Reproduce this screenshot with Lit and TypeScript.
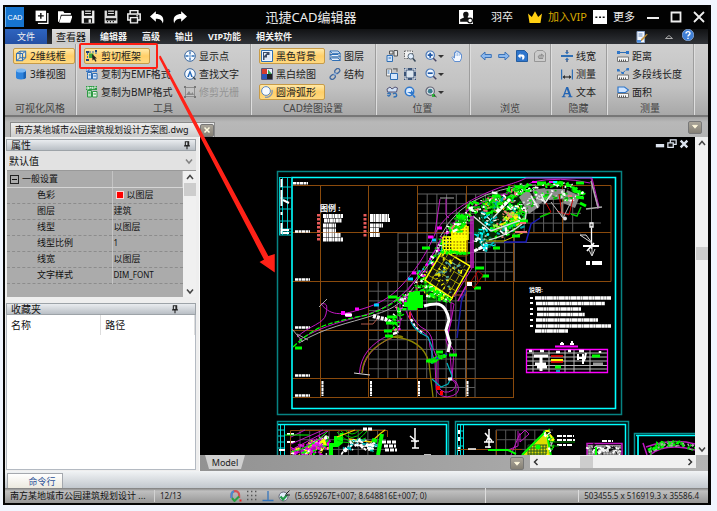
import { LitElement, html, css, svg } from "lit";
import { customElement, state } from "lit/decorators.js";

const B = "#2f6fb5";
const N = "#1d3f73";

/* Icon artwork, each on a 12 x 12 grid */
const icons: Record<string, unknown> = {
  wire: svg`<path d="M1.500 3.500 5 1.200h5.700v6.600L7.500 10.700H1.500zM1.500 3.500h6v7.200M7.500 3.500l3.200-2.300M5 1.200v6.600h5.700M5 7.800 1.500 10.700" fill="#e9f3ff" fill-opacity=".6" stroke=${B}/>`,
  cyl: svg`<path d="M1 2.500v7c0 2.600 10 2.600 10 0v-7z" fill="#2d83dd"/><ellipse cx="6" cy="2.600" rx="5" ry="2" fill="#78b7f5"/><path d="M8.500 4.500v6.400c1.600-.3 2.500-.8 2.500-1.400v-7c0 .9-1 1.600-2.500 2z" fill="#1a63b5"/>`,
  clip: svg`<path d="M0 1h3v2H0zM9 0h2v2H9zM0 9h3v2H0z" fill=${N}/><path d="M1.500 3v6M3 2h6M10 2v3" stroke=${B} stroke-dasharray="2 1" fill="none"/><path d="M3 3.500h4.500v4.500H3z" fill="#3fa83b"/><path d="m6 4 5 4.400-2 .1 1.600 2.400-1.200.8L8 9.300 6.500 10.600z" fill="#222"/>`,
  emf: svg`<path d="M0 0h11v4H0z" fill="#3a76c4"/><path d="M1 3V1h2M4 3V1l1.200 1L6.400 1v2M8 3V1h2" stroke="#fff" stroke-width=".8" fill="none"/><path d="M1.500 4.500h4v6.500h-4zM6.500 5.500h4.500v5.500H6.500z" fill="#dbe9fb" stroke=${B}/><path d="M7.500 8h2.500M2.500 7h2" stroke=${B}/>`,
  bmp: svg`<path d="M0 0h11v4H0z" fill="#2f9a45"/><path d="M1 3V1h1.600v2zM4 3V1l1.200 1L6.400 1v2M8 3V1h2v1" stroke="#fff" stroke-width=".8" fill="none"/><path d="M1.500 4.500h4v6.500h-4z" fill="#b7e3bd" stroke="#2f9a45"/><path d="M6.500 5.500h4.500v5.500H6.500z" fill="#eaf6ea" stroke="#2f9a45"/><path d="M7.500 8h2.500M2.500 7h2" stroke="#2f9a45"/>`,
  point: svg`<circle cx="6" cy="6" r="5.300" fill="#f6faff" stroke="#3b689f"/><path d="M6 1.500v3M6 7.500v3M1.500 6h3M7.500 6h3" stroke=${B} stroke-width="1.300"/><circle cx="6" cy="6" r=".8" fill=${B}/>`,
  find: svg`<circle cx="6" cy="6" r="5.300" fill="#f6faff" stroke="#3b689f"/><path d="M6 2 3.200 9h1.600L6 5.500 7.200 9h1.600z" fill="#2468b8"/><path d="m9 9 2.500 2.500" stroke="#345" stroke-width="1.400"/>`,
  raster: svg`<path d="M1.500 1.500h9v9h-9z" fill="#c4c4c4" stroke="#8d8d8d"/><path d="m2 9 3-4 2 3 1.500-2L10 9z" fill="#888"/><path d="M0 0h2v2H0zM10 0h2v2h-2zM0 10h2v2H0zM10 10h2v2h-2z" fill="#777"/>`,
  dark: svg`<path d="M.5.500h11v11H.5z" fill="#eef5ff" stroke=${B}/><path d="M2 2h8v8H2z" fill="#3d4d68"/><path d="M3.500 10V7.500H6V5H8.500V2H10v8zM3 3h3L3 6z" fill="#dfe9f7"/>`,
  bw: svg`<path d="M.5.500h11v11H.5z" fill="#fff" stroke="#557"/><path d="M1 1h5v5H1z" fill="#d63a2c"/><path d="M6 1h5v5H6z" fill="#eef"/><path d="M1 6h5v5H1z" fill="#2c55b8"/><path d="M6 6h5v5H6z" fill="#222"/><path d="M7 1.500 11 6H7z" fill="#33a055"/>`,
  arc: svg`<circle cx="5" cy="5" r="4.400" fill="#f7fbff" stroke="#5d88c0"/><path d="M11 4c1 4.500-2.500 8-7 7.300" fill="none" stroke="#8899b5" stroke-width="1.400"/>`,
  layers: svg`<path d="M1 1h8l2.300 2.300H3.200zM1 4.500h8l2.300 2.300H3.200zM1 8h8l2.300 2.500H3.200z" fill="#e8f2ff" stroke=${B}/><path d="M1 1v9M11.300 3.300v7" stroke=${B} stroke-width=".7"/>`,
  chain: svg`<rect x="5.500" y="1" width="5.500" height="4" rx="2" transform="rotate(-42 8.200 3)" fill="none" stroke="#41699f" stroke-width="1.300"/><rect x="1" y="7" width="5.500" height="4" rx="2" transform="rotate(-42 3.700 9)" fill="none" stroke="#41699f" stroke-width="1.300"/><path d="m4.500 7.500 3-3" stroke="#7fa6d8" stroke-width="1.300"/>`,
  locA: svg`<path d="M3.500 1H7v3H3.500zM8 .500h3.500v5.500H8z" fill="#e6e6e6" stroke="#555"/><path d="M1 5.500h5.500v6H1z" fill="#cfe3fb" stroke=${B}/><path d="M2.500 8h2.500" stroke=${B}/>`,
  locB: svg`<path d="M.5 1h5v7h-5z" fill="#f4f4f4" stroke="#777"/><path d="M1.500 3h2M1.500 5h2" stroke=${B}/><path d="M4.500 5.500h7v6h-7z" fill="#d6e8fc" stroke=${B}/><path d="M7 .8h4v3" fill="none" stroke="#666" stroke-width="1.200"/>`,
  locC: svg`<path d="M1 3 4 1l2 2 3-2 2.500 1-1 4H1.500z" fill="#cfe0f5" stroke="#557"/><path d="M1.500 8q1.800-2 3 0-1.600 3.500-3 1M7 8q2.500-2 3.500.5T7.500 11" fill="none" stroke=${B} stroke-width="1.400"/>`,
  zwin: svg`<path d="M.5 1h8v7.500h-8z" fill="#f1f1f1" stroke="#666" stroke-dasharray="1.500 1"/><circle cx="6.800" cy="6.300" r="2.800" fill="#e3f0ff" stroke="#567"/><path d="m9 8.500 2.500 3" stroke="#345" stroke-width="1.500"/>`,
  zext: svg`<path d="M0 0h12v12H0z" fill="#3a5376"/><path d="M2.500 2.500h7v7h-7z" fill="#dbe5ee"/><path d="M1 4V1h3M8 1h3v3M11 8v3H8M4 11H1V8" fill="none" stroke="#fff"/>`,
  zprev: svg`<circle cx="5.500" cy="5.500" r="4.200" fill="#dcecff" stroke="#2f78cc" stroke-width="1.500"/><path d="M3 6h4V4l3 3-3 2.500V8" fill="#2f78cc"/><path d="m9 9 2 2.500" stroke="#2f78cc" stroke-width="1.700"/>`,
  zin: svg`<circle cx="5.200" cy="5.200" r="4.200" fill="#f2f8ff" stroke="#4b7ab8" stroke-width="1.200"/><path d="M2.700 5.200h5M5.200 2.700v5" stroke="#1f57a5" stroke-width="1.700"/><path d="m8.300 8.300 3 3" stroke="#446" stroke-width="1.500"/>`,
  zout: svg`<circle cx="5.200" cy="5.200" r="4.200" fill="#f2f8ff" stroke="#4b7ab8" stroke-width="1.200"/><path d="M2.700 5.200h5" stroke="#1f57a5" stroke-width="1.700"/><path d="m8.300 8.300 3 3" stroke="#446" stroke-width="1.500"/>`,
  zobj: svg`<circle cx="5.200" cy="5.200" r="4.200" fill="#dbe5ea" stroke="#667" stroke-width="1.200"/><circle cx="5.200" cy="5.200" r="2.400" fill="#3e7c8e"/><path d="M7 8h3v3H7z" fill="#2fae3a"/><path d="m9 9 2.500 2" stroke="#333"/>`,
  hand: svg`<path d="M3.500 11.500 1 7.500l.8-.8L3.500 8V2.500h1.400V1h1.500v.7h1.500v1h1.400v1.500h1.200v4L9 11.500z" fill="#f4f8ff" stroke="#5f8ed0"/><path d="M5 3v3M6.600 2.500V6M8.200 3.500V6" stroke="#8fb2e0" stroke-width=".8"/>`,
  back: svg`<path d="M.7 6 5 2v2.500h6.300v3H5V10z" fill="#8bb8ee" stroke="#3c73b8"/>`,
  fwd: svg`<path d="M11.300 6 7 2v2.500H.7v3H7V10z" fill="#8bb8ee" stroke="#3c73b8"/>`,
  undoV: svg`<path d="M.5.500h8l3 3v8H.5z" fill="#2f76cd" stroke="#245d9f"/><path d="M2 9.500h5.500c3-4-1-6-3-4.500V3.500L1.800 6l2.700 2.500V6.800c1-.6 2.500 0 1.500 2.700" fill="#fff"/>`,
  redoV: svg`<path d="M3 .5h6l2.500 2.500v8.500H.5V3z" fill="#cbcbcb" stroke="#969696"/><path d="M9 8.500H5c-2-3 1-4 2.500-3V4L10 6.200" fill="#aaa" stroke="#8c8c8c"/>`,
  lw: svg`<path d="M0 5h12v2H0z" fill="#2f6fb5"/><path d="M6 0v3M6 12V9" stroke=${N} stroke-width="1.200"/><path d="m4 2 2 2.500L8 2zM4 10l2-2.500L8 10z" fill=${B}/>`,
  dim: svg`<path d="M.6 1.500v10M11.400 1.500v10" stroke=${B} stroke-width="1.200"/><path d="M2 9h8" stroke="#333" stroke-width="1.200"/><path d="m1.500 9 2.500-2v4zM10.500 9 8 7v4z" fill="#333"/>`,
  txt: svg`<path d="M5.300 1h1.800l3.300 9.300h1v1H7.200v-1h1L7.500 8.200H4l-.7 2.100h1.200v1H.8v-1h1zM4.400 7h2.700L5.800 3.300z" fill="#2465b4"/>`,
  dist: svg`<path d="M.5 11.500V7h11v4.500z" fill="#f5f5f5" stroke="#777"/><path d="M2.500 9.500v2M4.500 9.500v2M6.500 9.500v2M8.500 9.500v2" stroke="#555"/><path d="M2 2.500h8" stroke=${B}/><path d="M0 1h3v3H0zM9 1h3v3H9z" fill="#2f76c8"/>`,
  poly: svg`<path d="M.5 11.500V7h11v4.500z" fill="#f5f5f5" stroke="#777"/><path d="M2.500 9.500v2M4.500 9.500v2M6.500 9.500v2M8.500 9.500v2" stroke="#555"/><path d="m1.500 2 4 3 5-4" stroke=${B} fill="none" stroke-dasharray="2 1"/><path d="M0 1h2.500v2.500H0zM4.500 4H7v2H4.500zM9.500 0H12v2.500H9.500z" fill="#2f76c8"/>`,
  area: svg`<path d="M.5 11.500V7.500h11v4z" fill="#f5f5f5" stroke="#777"/><path d="M2.500 9.500v2M4.500 9.500v2M6.500 9.500v2M8.500 9.500v2" stroke="#555"/><path d="M1 1h6.500l4 3-3 2.500H1z" fill="#cfe4ff" stroke="#2f76c8" stroke-width="1.200"/>`,
  add: svg`<path d="M.5.500h9v9h-9z" fill="#fff"/><path d="M5 2.500v5M2.500 5h5" stroke="#111" stroke-width="1.200"/><path d="M11 2.500v9H2.500" fill="none" stroke="#fff" stroke-width="1.200"/>`,
  open: svg`<path d="M0 1h4.500l1 1.500H11V4H2.500L1 10H0z" fill="#fff"/><path d="M3 5h9.500l-2 6H1z" fill="#fff"/>`,
  save: svg`<path d="M.5.500h11v11H.5z" fill="#eee"/><path d="M2.500 0h7v5h-7z" fill="#111"/><path d="M3.500 1h5M3.500 3h5" stroke="#ddd"/><path d="M2.500 7h7v4h-7z" fill="#111"/><path d="M6.500 8h2v3h-2z" fill="#eee"/>`,
  saveas: svg`<path d="M.5.500h11v11H.5z" fill="#ddd"/><path d="M2.500 0h7v5h-7z" fill="#111"/><path d="M3.500 1h5M3.500 3h5" stroke="#ddd"/><path d="M1.500 7h9v2h-9z" fill="#111"/><path d="M2.500 10h1M5 10h1M7.500 10h1" stroke="#111"/>`,
  print: svg`<path d="M2.700.5h6.600v3H2.700zM.7 3.500h10.600v5H.7z" fill="#111" stroke="#eee" stroke-width="1.300"/><path d="M3 6.500h6V11H3z" fill="#111" stroke="#eee" stroke-width="1.200"/><path d="M8 5h1.500" stroke="#fff"/>`,
  undo: svg`<path d="M5 1v2.500c5 0 7.500 3 6 8-.8-3-2.500-4-6-4V10L0 5.500z" fill="#fff"/>`,
  redo: svg`<path d="M7 1v2.500c-5 0-7.500 3-6 8 .8-3 2.500-4 6-4V10l5-4.500z" fill="#fff"/>`,
  user: svg`<path d="M0 0h12v12H0z" fill="#fff"/><path d="M6 1.500c2.300 0 2.500 2 2 3.500L7.300 6.300 10 7.500V10H1V8l3.300-1.500L3.700 5c-.5-2 0-3.500 2.300-3.500z" fill="#111"/><circle cx="9.500" cy="9" r="2" fill="#fff" stroke="#111"/>`,
  crown: svg`<path d="M0 3 3.300 6 6 1l2.700 5L12 3l-1.300 8.200H1.300z" fill="#ffcf12"/>`,
  dots: svg`<path d="M0 0h12v12H0z" fill="#fff"/><path d="M2 5.500h1.700v1.300H2zM5.200 5.500h1.700v1.300H5.200zM8.300 5.500H10v1.300H8.300z" fill="#111"/>`,
  min: svg`<path d="M0 6h12v2H0z" fill="#eee"/>`,
  max: svg`<path d="M1.500 1.500h9v9h-9z" fill="none" stroke="#eee" stroke-width="1.800"/>`,
  close: svg`<path d="m1 1 10 10M11 1 1 11" stroke="#eee" stroke-width="1.800"/>`,
  note: svg`<path d="M1 .5h7.500v11H1z" fill="#f4f8ff" stroke="#8aa3c8"/><path d="M2.500 3h4M2.500 5h4" stroke="#6b8dc0"/><path d="m11.500 3.500-5 5.500-1.500 1 .6-2 5-5z" fill="#e8a63a" stroke="#8b6a24" stroke-width=".5"/><path d="M1 9h4v2.500H1z" fill="#4b8ee0"/>`,
  caret: svg`<path d="m2.500 7.500 3.500-3 3.500 3z" fill="none" stroke="#aaa"/>`,
  help: svg`<circle cx="6" cy="6" r="5.800" fill="#3f7fd6" stroke="#a8c5ee" stroke-width=".6"/><path d="M4 4.500c0-2.500 4-2.500 4 0 0 1.300-2 1.400-2 3M6 8.700V10" fill="none" stroke="#fff" stroke-width="1.400"/>`,
  pin: svg`<path d="M4 2h4v4.500H4zM2.500 7h7M6 7v4" fill="none" stroke="#222" stroke-width="1.300"/><path d="M6.500 2H8v4.500H6.500z" fill="#222"/>`,
  magnet: svg`<path d="M1.500 8V5a3.800 3.800 0 0 1 7.600 0v3" fill="none" stroke="#d45252" stroke-width="2.200"/><path d="M1.500 8V5c0-2 1-3.300 2.500-3.700" fill="none" stroke="#4a8bd0" stroke-width="2.200"/><path d="m2 8 2.500 3L9 6.500" fill="none" stroke="#28a044" stroke-width="2"/><path d="M9.500 9.500h2v2h-2z" fill="#e22"/>`,
  grid: svg`<path d="M1 1.500h11M1 5.500h11M1 9.500h11" stroke="#555" stroke-width="1.400" stroke-dasharray="1.400 2.600"/>`,
  ortho: svg`<path d="M6 1v9.500M.5 10.500h11" stroke="#3576bd" stroke-width="1.300"/>`,
  snap: svg`<circle cx="5.500" cy="6.500" r="4.500" fill="#e3eefb" stroke="#667"/><path d="m2.500 6.500 2.500 3 4-4.500" fill="none" stroke="#23984a" stroke-width="2.200"/><path d="M8 4 11.500.500M7 5h5" stroke="#222"/>`,
  mrest: svg`<path d="M4 1h7v5.500H4z" fill="#111" stroke="#dce3ee" stroke-width="1.500"/><path d="M1 4.500h6.500V10H1z" fill="#111" stroke="#dce3ee" stroke-width="1.500"/>`,
  mclose: svg`<path d="m2 2 8 8M10 2l-8 8" stroke="#dce3ee" stroke-width="2.800"/>`,
  mmin: svg`<path d="M1 6h10v4H1z" fill="#dce3ee"/>`,
  chevU: svg`<path d="m3 8 3-3.500L9 8" fill="none" stroke="#444" stroke-width="1.500"/>`,
  chevD: svg`<path d="m3 4.500 3 3.500 3-3.500" fill="none" stroke="#444" stroke-width="1.500"/>`,
  chevL: svg`<path d="M7.500 3 4.500 6l3 3" fill="none" stroke="#333" stroke-width="1.500"/>`,
  chevR: svg`<path d="m4.500 3 3 3-3 3" fill="none" stroke="#333" stroke-width="1.500"/>`,
  wchev: svg`<path d="m3 4 3 3.500L9 4z" fill="#fff8dc" stroke="#fff8dc"/>`,
  wx: svg`<path d="m3 3 6 6M9 3 3 9" stroke="#fffbe0" stroke-width="1.800"/>`,
};

const icon = (name: string, cls = "ic") =>
  html`<svg class=${cls} viewBox="0 0 12 12" aria-hidden="true">${icons[name]}</svg>`;

/* Repeatable noise so the planting and roads look the same at every paint */
function noise(seed: number) {
  let s = seed;
  return () => ((s = (s * 16807) % 2147483647) - 1) / 2147483646;
}

type Pt = [number, number];

function scatter(path: Pt[], spread: number, count: number, colors: string[], seed: number, size = 4, flat = 0.7) {
  const r = noise(seed);
  r();
  const out: unknown[] = [];
  for (let i = 0; i < count; i++) {
    const t = r() * (path.length - 1);
    const k = Math.floor(t);
    const f = t - k;
    const x = path[k][0] + (path[k + 1][0] - path[k][0]) * f + (r() - 0.5) * spread;
    const y = path[k][1] + (path[k + 1][1] - path[k][1]) * f + (r() - 0.5) * spread;
    const w = 1 + r() * size;
    const a = r() * 3;
    out.push(svg`<path d="M${x} ${y}l${Math.cos(a) * w} ${-Math.sin(a) * w * flat}" stroke=${colors[Math.floor(r() * colors.length)]} stroke-width=${1 + r() * 1.5}/>`);
  }
  return out;
}

function mesh(x0: number, y0: number, x1: number, y1: number, step: number) {
  let d = "";
  for (let x = x0; x <= x1 + 1; x += step) d += `M${x} ${y0}V${y1}`;
  for (let y = y0; y <= y1 + 1; y += step) d += `M${x0} ${y}H${x1}`;
  return d;
}

@customElement("cad-drawing")
class CadDrawing extends LitElement {
  static styles = css`
    :host { display: block; background: #000; overflow: hidden; }
    svg { display: block; width: 100%; height: 100%; font-family: "Liberation Serif", "Noto Sans CJK SC", serif; }
  `;

  render() {
    return html`<svg viewBox="200 137 495 318" preserveAspectRatio="xMinYMin slice" fill="none">
      <path d="${mesh(417.5, 194, 581, 233, 9.7)}M417 242.500H562M591.500 185v48M601 223H581" stroke="#606060"/>
      <path d=${mesh(398, 233, 514, 281, 9.7)} stroke="#606060"/>
      <path d="${mesh(368.5, 281.5, 475, 378, 9.7)}M436 387.500h39M436.400 378v19M446 378v19M456 378v19M465.500 378v19M475 378v19" stroke="#5c5c5c"/>
      <path d="M292 185.500H611V281.500H292M292 232.500H611M292 330.500H514M292 378.500H514M292 397.500H514M320.500 185V397M368.500 185V397M417.500 185V233M417.500 281V397M466.500 185V397M513.500 233V397M562.500 185V281" stroke="#8a4a0c"/>
      <path d="M277.500 171.500H621.500V414.500H277.500z" stroke="#078282" stroke-width="1.500"/>
      <path d="M292 177.500H615.500V408.500H292z" stroke="#0ff" stroke-width="1.600"/>
      <path d="M279.500 177.500H292M279.500 177V235M282.500 177v58M287.500 177v58M279 187h13M279 198h13M279 209h13M279 221h13M279 229h13M279 232h13M279 235h13" stroke="#0cc"/>
      <path d="M281.500 179v8M281.500 190v16M281.500 212v3M281.500 223v11M289 203l-6-3M281 230h8M283 233h6" stroke="#fff" stroke-width="2"/>
      <g stroke="#fff" stroke-width="2.400" stroke-dasharray="3 .5">
        <path d="M293 183.300h15M295 231.500h15M295 279.500h15M295 327.500h15M295 375.500h15M295 395.500h15"/>
        <path d="M322.500 381v15M371 381v15M419 381v15M467.500 381v15" stroke-width="2"/>
      </g>
      <text x="320" y="211" font-size="8" font-weight="bold" fill="#fff">图例 :</text>
      <g stroke="#fff" stroke-width="4" stroke-dasharray="3 .4 2 .5">
        <path d="M323 216h20M324 220.500h18M323 225.500h13M323 230.500h13M323 235h18M323 239.500h20M370 216h19M370 220h20M370 225.500h13M370 230h9M370 235h10"/>
      </g>
      <path d="M318.500 214v28M365 214v24" stroke="#e85b5b" stroke-width="3" stroke-dasharray="2.500 1.500"/>

      <g stroke="#c217c2">
        <path d="M297 337C310 325 324 324 326 314S326 303 321 304M321 304C332 318 345 314 362 309S390 298 402 285 426 255 434 236 462 204 484 194 515 184 526 178M299 340C325 324 350 320 368 314S400 299 412 284 436 250 443 237 466 209 488 200 524 188 534 181"/>
        <path d="M440 199 435 232M446 199v16l3 3M526 178h66l7 29M591 178l7 31M532 182q28-6 58 1M408 290q26-34 34-54M466 211q18-12 42-17"/>
        <path d="M438 276C432 283 428 290 400 298M400 296v28q0 7-7 11M389 335Q361 348 359.500 373M393 337Q364 350 362.500 373"/>
        <path d="M406 311q6 16 17 21 7 4 7 15l5 15 1 23q-1 11 11 12 14-2 11-11-1-5-6-7l2-28-7-12 4-17 3-18-10-5M410 311q5 14 16 19 7 5 7 18l5 13v25q5 10 15 4 6-6-1-10l-2-27-4-13 5-19v-18M472 268l-18 29"/>
      </g>
      <path d="M299 343C325 327 350 323 371 316S398 307 414 287M297 334l11 6M292 329l11 13M319 307l8-8M414 284q24-30 28-43M440 237q15-30 46-42 30-11 50-10M440 198h14" stroke="#aaa"/>
      <path d="M293 347q19-18 36-23t38-9q25-9 33-18" stroke="#0f0" stroke-width="1.300" stroke-dasharray="5 2"/>
      <path d="M295 348h7M342 313h2M398 297v4" stroke="#0f0" stroke-width="3"/>
      <path d="M341 313h4M346 315h5" stroke="#f0f" stroke-width="4"/><path d="M345 315h7" stroke="#fff" stroke-width="3"/>
      <path d="M374 305h5M408 279h5M432 240h4" stroke="#0cf" stroke-width="3"/><path d="M437 228h5M428 237h5M412 273h4M355 309h4" stroke="#f0f" stroke-width="3"/>
      <path d="M362 373Q363 350 393 337 423 339 429 363L433 397M393 337q6-2 10 0" stroke="#8c8500" stroke-width="1.300"/>
      <path d="M354 373l16 2" stroke="#ddd"/>
      <path d="M361 324h12l4-5" stroke="#ad5a4c"/>
      <path d="M373 316l7 2 5 1 7 4" stroke="#fff" stroke-width="4" stroke-dasharray="3 1"/>

      ${scatter([[420, 278], [430, 264], [442, 246], [452, 228]], 7, 60, ["#0f0", "#0d0", "#fff", "#f0f", "#0cc"], 22222)}
      ${scatter([[423, 285], [403, 300], [400, 312], [394, 334]], 8, 70, ["#0f0", "#0f0", "#fff", "#f6a", "#f0f"], 17177)}
      <path d="M409 292h5v-1h6v4h3v13h-6v2h-9v-3h-4v-5h3z" fill="#0f0"/>
      <path d="M388 297h9M387 317h10M386 323h10M384 331h8M385 336h8" stroke="#0f0" stroke-width="3"/>
      <path d="M423 281 450 297 428 304z" fill="#0a0" fill-opacity=".5"/>
      ${scatter([[422, 278], [430, 290], [438, 296], [450, 297]], 12, 130, ["#0f0", "#0f0", "#0c0", "#0f0", "#ff0", "#fff"], 81818)}
      <path d="M443 250 470 266 452 298 425 280z" fill="#111" stroke="#ff0" stroke-width="1.500"/>
      <path d="M440 256l27 15M437 261l26 16M432 268l27 16M428 275l28 16M448 254l-18 29M454 258l-18 29M460 262l-18 29M465 265l-17 30" stroke="#a39f00"/>
      ${scatter([[441, 258], [458, 270], [436, 276], [450, 290]], 9, 90, ["#ff0", "#dd0", "#111", "#222", "#5a9"], 31313, 5)}
      <path d="M451 226h17v28h-17z" fill="#b59a00"/>
      <path d="${mesh(443, 237, 467, 253, 3.2)}${mesh(452, 226, 467, 240, 3.2)}" stroke="#ff0" stroke-width="1.500"/>
      ${scatter([[443, 252], [468, 254]], 3, 25, ["#0f0"], 4567)}
      <path d="M452 256h15v-16" stroke="#865000"/>

      <path d="M474 216q14-16 42-24l18 2-9 8q3 14-6 28-18 12-30 9l-13 10-4-10z" fill="#042504"/>
      ${scatter([[452, 232], [460, 222], [472, 211], [490, 201], [510, 194], [526, 189]], 9, 170, ["#0f0", "#0f0", "#0d0", "#0a0", "#fff", "#e77"], 5050, 6)}
      ${scatter([[484, 213], [489, 222], [480, 236], [482, 247], [490, 244]], 11, 110, ["#0ff", "#0bb", "#0ff", "#fff", "#063"], 13131, 5)}
      ${scatter([[490, 208], [504, 203], [516, 209], [520, 220], [508, 226], [498, 232]], 14, 240, ["#0f0", "#0d0", "#0f0", "#0a0", "#0f0", "#0aa", "#fff", "#dd0", "#e77"], 9090, 6)}
      ${scatter([[494, 230], [506, 218], [514, 214]], 7, 45, ["#dd3", "#ff0", "#e77", "#8f4"], 6868, 4)}
      <path d="M473 216l18 15 33-12M475 251l6-3M489 240q22-6 34-17 5-7 2-16M493 218l17-18" stroke="#ddd" stroke-width="1.500"/>
      <path d="M497 212l13-13M474 251l9-4" stroke="#fff" stroke-width="3" stroke-dasharray="4 1"/>
      <path d="M519 197l9-7 12 16-11 8zM532 190l13-2 6 9-13 8zM546 189h19v10l-16 1zM567 190l13 6-5 12-12-5z" fill="#8c8c8c"/>
      ${scatter([[518, 194], [530, 188], [546, 185], [562, 185], [574, 189], [582, 197]], 5, 85, ["#0f0", "#0f0", "#0f0", "#fff"], 1111, 6, 0.3)}
      ${scatter([[522, 208], [532, 201], [545, 196], [558, 195], [570, 199]], 9, 60, ["#0f0", "#fff", "#ddd", "#0b0"], 4545, 4)}
      <path d="M531 196l7 12M541 194l4 9 7-10" stroke="#eee" stroke-width="1.500"/>
      <path d="M546 203l5 9-11 5M559 194l3 20M573 199l-4 16-12-4" stroke="#c00"/>
      <path d="M551 202l12 16 8-16M562 202v15" stroke="#bbb"/><circle cx="565" cy="218.500" r="2" fill="#ddd"/>
      <path d="M540 217l10-4M571 214l6 2 4-9" stroke="#0c0" stroke-width="1.500"/>
      <path d="M504 242h22l5-18 9-6" stroke="#1919b8" stroke-width="1.500"/><path d="M486 241l18 0 23-10" stroke="#cc0"/>
      <path d="M580 203l6 3M576 197l8 1M555 183h8M537 183h9M576 183h8M515 187h8M492 196h8M456 216h7M493 248h7M520 221h8M512 236h8M422 248h8M475 268h9M482 276h7M474 288h7" stroke="#0f0" stroke-width="3"/>
      <path d="M515 232h12M520 223h6M568 196h4" stroke="#e77" stroke-width="2"/>
      <path d="M586 209l16-2M591 181l7 26" stroke="#aaa" stroke-width="1.500"/><path d="M532 182h5M549 182h6" stroke="#f0f" stroke-width="2"/><path d="M553 182h4" stroke="#0ff" stroke-width="2"/>
      <path d="M470 283l8-12 5 4-9 13zM476 272l2 9" stroke="#a00"/>
      <path d="M467 284h5" stroke="#fff" stroke-width="4"/><path d="M452 295h15" stroke="#a64a35"/><path d="M462 296l-5 42M466 290l-5 12" stroke="#1c1ca0" stroke-width="1.500"/>
      <path d="M473 216v52M471 216v52M466 286l-8 15" stroke="#c2c" stroke-width="1.500"/>

      <path d="M424 306q6-2 12-2 6 0 9 5t4 11l-3 10 4 13-2 9" stroke="#fff" stroke-width="3"/>
      <path d="M411 319l4 8 8 7" stroke="#fff" stroke-width="2.500" stroke-dasharray="3 2"/>
      <path d="M411 322q4 9 17 15l4 10v17M447 363l5 13-4 8-7 3-9-8" stroke="#00aeb8" stroke-width="1.300"/>
      <path d="M426 361h8M434 359l12-3M436 352h7M449 355h8" stroke="#0f0" stroke-width="3"/><path d="M430 361l17-7" stroke="#2434bb" stroke-width="2"/>
      ${scatter([[430, 362], [446, 357]], 4, 22, ["#0f0", "#0f0", "#0d0"], 7474, 5)}
      <path d="M436 388h4M440 393h3" stroke="#f00" stroke-width="4"/><path d="M448 379h4" stroke="#eee" stroke-width="3"/>
      <path d="M410 312v7" stroke="#d22" stroke-width="2"/>

      <path d="M590 223v4h3v-4zM591.500 228v21" stroke="#fff" stroke-width="1.300"/><path d="M583 246h16M587 251l7-8" stroke="#fff" stroke-width="1.800"/>
      <path d="M580 235h6l6 8zM592 246v9M589 250l3 6 3-7" stroke="#ddd"/>
      <path d="M588 261v4M592 263h10" stroke="#fff" stroke-width="4"/>
      <text x="529" y="292" font-size="6" font-weight="bold" fill="#fff">说明:</text>
      <g stroke="#fff" stroke-width="3.500" stroke-dasharray="6 .3 3 .3 2 .3">
        <path d="M535 298h76M536 303.500h69M537 309h44M537 314.500h48M536 320h62M536 326h75M535 331h33"/>
        <path d="M530 298h3M530 303h3M530 309h3M530 314h3M530 320h3M530 326h3" stroke-width="2"/>
      </g>
      <path d="M560 344h4M570 344h4M562 342v3M572 341v4" stroke="#fff" stroke-width="2"/><path d="M555 346.500h23" stroke="#f0f" stroke-width="2"/>
      <path d="M527 353h80M527 357h80M527 361h80M527 365.500h80M527 369h80M533 349v23M549 349v23M565 349v23M574 349v23M590 349v23" stroke="#bbb"/>
      <path d="M526.500 349.500H607.500V372.500H526.500z" stroke="#f0f" stroke-width="1.300"/>
      <path d="M534 356h14M541 357v5M535 364h11M537 367h10M541 362v9" stroke="#fff" stroke-width="3"/>
      <path d="M578 354v6M583 354v10M586 353l-2 8M579 358h7" stroke="#fff" stroke-width="2"/>
      <path d="M529 351h3M540 351h4M556 352h4M568 351h3M579 351h5M600 351v2" stroke="#fff" stroke-width="2.500"/>
      <path d="M551 356h12M551 362h12" stroke="#f00" stroke-width="1.600"/><path d="M551 360h12" stroke="#ff0" stroke-width="2"/><path d="M555 367h6M592 356h8" stroke="#0f0" stroke-width="3"/><path d="M556 371h4" stroke="#0cf" stroke-width="1.500"/><path d="M593 364h10" stroke="#999" stroke-width="3"/>

      <path d="M277.500 460V421.500H448.500V460M455.500 460V421.500H628.500V460M634.500 460V433.500H700" stroke="#078f8f" stroke-width="1.500"/>
      <path d="M278 424.500H446.500V460M457 424.500H625.500V460M636 435.500H700" stroke="#0ff" stroke-width="1.500"/>
      <path d="M280.500 425v32M284.500 425v32M457.500 425v32M460.500 425v32M463.500 425v32M278 430h7M278 436h7M278 442h7M278 448h7M457 431h7M457 438h7M457 446h7M637.500 436v20M638.500 436v20" stroke="#0dd"/>
      <path d="M279 450h6M459 430v4M459 437v4M459 447v4M287 434h7M287 442h8" stroke="#fff" stroke-width="2"/>
      <path d=${mesh(300, 430, 386, 455, 9.7)} stroke="#555"/><path d=${mesh(496, 430, 553, 455, 9.7)} stroke="#555"/>
      <path d="M290.500 455V430.500H387.500V437M496.500 455V430.500M457 449.500h65" stroke="#8a4a0c"/>
      <path d="M291 444l32-14M291 450l36-19M304 455l24-24M291 437l14-7" stroke="#c217c2"/>
      ${scatter([[294, 454], [308, 448], [323, 441], [325, 450], [304, 454]], 9, 230, ["#0f0", "#b0b", "#d0d", "#f0f", "#ff0", "#fff"], 8008)}
      <path d="M291 452q20-4 36-20M285 435h24" stroke="#0f0"/>
      <path d="M320 442l4-3 2 5z" fill="#ff0" stroke="#ff0"/>
      <path d="M329 455v-12h5v-7h6v-3h3v10l-5 4h-5v8z" fill="#0f0"/>
      <path d="M337 432q15 18 30-1M341 431q11 13 22 0M345 430q7 8 14 0M337 440q12 6 29-2" stroke="#0c0"/>
      <path d="M349 439l22 3 10-9 4-3M337 437l18-7" stroke="#f4d000" stroke-width="1.300"/>
      <path d="M382 434l-4 21M377 441l-5-1" stroke="#0f0" stroke-width="4"/>
      ${scatter([[343, 453], [352, 446], [361, 442], [370, 450], [375, 445]], 6, 80, ["#fff", "#fff", "#0bb"], 9696)}
      <path d="M363 429h10M382 442h14M384 446h12M385 450h12" stroke="#fff" stroke-width="3" stroke-dasharray="4 1"/>
      <path d="M415 428v20M412 448h7M410 436l7 6M411 441h8M424 455h7" stroke="#fff" stroke-width="1.500"/>
      <path d="M489 429v19M485 433l7 8M484 442h10M489 436l-3 6M468 449h8M485 447h6" stroke="#fff" stroke-width="1.500"/>
      <path d="M511 455l9-22M520 435l5-5 4 4-9 8zM518 431v15l-10 4" stroke="#c217c2"/>
      <path d="M522 456 546 432 551 456z" fill="#dd0"/><path d=${mesh(528, 445, 547, 455, 3)} stroke="#252"/>
      <circle cx="538" cy="447" r="2.500" fill="#0f0"/>
      <path d="M522 455l23-23M488 450h20l8 4M547 434l4 22" stroke="#0f0" stroke-width="2"/>
      ${scatter([[546, 433], [552, 439], [549, 453]], 7, 35, ["#0f0", "#fff", "#ff0"], 7777, 3)}
      <path d="M557 436h17M557 440h18M557 445h16M602 441h11" stroke="#fff" stroke-width="2" stroke-dasharray="5 1 3 1"/><path d="M550 442h25M550 446h9" stroke="#080"/>
      <path d="M587 445h34v10h-34z" fill="#bbb"/><path d=${mesh(588, 446, 621, 455, 3)} stroke="#333" stroke-width=".6"/>
      <path d="M587 455V443.500H622V455" stroke="#c217c2" stroke-width="1.500"/>
      ${scatter([[590, 448], [600, 452], [610, 448], [619, 452]], 6, 80, ["#fff", "#eee", "#fff", "#111"], 5555)}
      <path d="M596 447v8" stroke="#0f0" stroke-width="2"/>
      <path d="M646 447q27-9 49-3M643 443l4 12M650 455q15-13 45-5" stroke="#c217c2" stroke-width="1.500"/>
      ${scatter([[649, 453], [658, 446], [674, 444], [695, 449]], 5, 95, ["#0f0", "#0f0", "#0d0", "#aaa"], 1919)}
    </svg>`;
  }
}

@customElement("app-root")
class AppRoot extends LitElement {
  static styles = css`
    :host {
      display: flex; flex-direction: column; box-sizing: border-box; min-height: 100vh;
      padding: 5px 6px 6px 3px; background: #f1f6ff; color: #222;
      font: 10px/14px "Noto Sans", "Noto Sans CJK SC", sans-serif;
    }
    * { box-sizing: border-box; }
    button, select {
      font: inherit; color: inherit; background: none; border: 0; padding: 0; margin: 0; white-space: nowrap;
    }
    svg { display: block; flex: none; }
    .ic { width: 12px; height: 12px; }
    .big { width: 14px; height: 14px; }
    .small { width: 10px; height: 10px; }
    .window {
      position: relative; flex: 1; display: flex; flex-direction: column;
      background: #b3b3b3; border: solid #050505; border-width: 0 3px 2px 2px;
    }

    .title { display: flex; align-items: center; height: 24px; background: #020202; color: #eee; }
    .logo {
      width: 19px; height: 20px; margin-right: 11px; background: #1674cf; color: #fff;
      font: 7px/22px "Liberation Sans", sans-serif; text-align: center; border-left: 1px solid #6db3f3;
    }
    .quick { display: flex; gap: 9px; }
    .caption { flex: 1; margin: 0; padding-right: 24px; text-align: center; font-size: 13px; font-weight: 400; line-height: 20px; }
    .account { display: flex; align-items: center; font-size: 11px; line-height: 16px; gap: 6px; }
    .vip { color: #d9a800; }
    .name { margin: 0 9px 0 12px; }
    .winbtns { display: flex; gap: 11px; margin: 0 3px 0 6px; }

    .menu {
      display: flex; align-items: stretch; height: 15px; font-size: 9px; font-weight: 700; line-height: 14px;
      color: #f2f2f2; background: linear-gradient(#111214, #303338); padding-right: 14px; gap: 1px;
    }
    .menu button { padding: 0 7px; }
    .menu .file { width: 42px; background: linear-gradient(#2e64c0, #2450a4); margin-right: 4px; font-weight: 400; }
    .menu .on { color: #111; background: linear-gradient(#dcdcdc, #c9c9c9); padding: 0 4px; font-size: 10px; font-weight: 400; margin-right: 2px; }
    .menu .tools { display: flex; align-items: center; gap: 15px; margin-left: auto; }
    .menu .tools button { padding: 0; }
    .menu .tools .last { margin-left: -8px; }

    .ribbon { display: flex; height: 73px; background: linear-gradient(#cfcfcf, #c2c2c2 60%, #a8a8a8); border-bottom: 2px solid #777; }
    .group {
      display: flex; flex-direction: column; flex: none; padding-top: 4px;
      border-right: 1px solid #9d9d9d; box-shadow: 1px 0 #dedede;
    }
    .group h2 { margin: 0; font-size: 10px; font-weight: 400; line-height: 16px; text-align: center; color: #444; }
    .cmds { display: grid; grid-template-rows: repeat(3, 16px); grid-auto-flow: column; row-gap: 2px; padding-left: 8px; justify-content: start; }
    .cmds button { display: flex; align-items: center; gap: 3px; height: 16px; padding: 0 8px 0 1px; border: 1px solid transparent; border-radius: 2px; justify-self: start; }
    .cmds .on { background: linear-gradient(#ffe9a8, #ffcf68 50%, #ffd980); border-color: #c79b48; }
    .cmds button:disabled { color: #949494; }
    .tight button { padding-right: 0; gap: 1px; }
    .g1 { width: 71px; } .g2 { width: 175px; } .g3 { width: 125px; } .g4 { width: 94px; }
    .g5 { width: 81px; } .g6 { width: 56px; } .g7 { width: 87px; }
    .g2 .cmds { grid-template-columns: 98px auto; }
    .g3 .cmds { grid-template-columns: 68px auto; }
    .g4 .cmds { grid-template-columns: 18px 21px 26px 14px; }
    .g5 .cmds { grid-template-columns: repeat(4, 18px); }
    .drop::after { content: ""; border: 3px solid transparent; border-top-color: #333; border-bottom: 0; }

    .docs { display: flex; align-items: flex-end; justify-content: space-between; height: 20px; padding: 0 6px 0 5px; background: linear-gradient(#a2a2a2, #b8b8b8 25%, #b4b4b4); }
    .doc { display: flex; align-items: center; height: 15px; padding-left: 4px; gap: 11px; font-size: 9px; color: #111; background: linear-gradient(#ededed, #ccc); border: 1px solid #8a8a8a; border-bottom: 0; }
    .chip { display: grid; place-items: center; width: 14px; height: 13px; background: linear-gradient(#aaa59a, #858075); border: 1px solid #777; border-radius: 2px; }
    .docs > .chip { align-self: center; }

    .body { flex: 1; display: grid; grid-template-columns: 195px minmax(0, 1fr); min-height: 334px; }
    .side { display: flex; flex-direction: column; padding: 2px 3px 1px 1px; background: #eee; border-right: 1px solid #fafafa; }
    .head { display: flex; align-items: center; justify-content: space-between; height: 12px; padding: 0 3px 0 4px; line-height: 12px; color: #111; border: 1px solid #9da3a8; background: linear-gradient(#e9ecef, #b9bfc5); }
    .head h3 { margin: 0; font-size: 10px; font-weight: 400; }
    .fav .head { padding-right: 15px; }
    .pick { position: relative; display: flex; }
    .pick svg { position: absolute; right: 1px; top: 4px; opacity: .6; }
    .pick select { appearance: none; width: 100%; height: 19px; padding: 0 3px; color: #111; background: #e2e2e2; border-radius: 0; }
    .props { display: flex; height: 127px; margin-left: 1px; background: #ababab; border-top: 1px solid #999; }
    .props table { flex: 1; align-self: start; border-collapse: collapse; table-layout: fixed; font-size: 9px; line-height: 14px; color: #111; }
    .props tr { height: 16px; }
    .props th, .props td { padding: 0; text-align: left; font-weight: 400; border-bottom: 1px dashed #8c8c8c; white-space: nowrap; }
    .props tbody th { padding-left: 30px; width: 105px; border-right: 1px solid #c4c4c4; }
    .props thead th { border-bottom: 1px solid #d5d5d5; padding-left: 3px; border-right: 1px solid #c4c4c4; }
    .props td { padding-left: 1px; }
    .latin { font-size: 8px; }
    .fold { display: inline-flex; align-items: center; justify-content: center; width: 9px; height: 9px; margin-right: 3px; border: 1px solid #222; vertical-align: middle; }
    .fold::after { content: ""; width: 5px; height: 1px; background: #111; }
    .swatch { display: inline-block; width: 8px; height: 8px; margin: 0 3px 0 2px; background: red; border: 1px solid #ffd5d5; vertical-align: -1px; }
    .vbar { display: flex; flex-direction: column; align-items: center; justify-content: space-between; width: 13px; background: #f0f0f0; }
    .thumb { display: block; background: #cdcdcd; }
    .vbar .thumb { width: 12px; height: 13px; }
    .props .thumb { margin-bottom: 89px; }
    .fav { display: flex; flex-direction: column; flex: 1; margin-top: 6px; }
    .list { flex: 1; background: #fff; border: 1px solid #b4bac2; border-top: 0; }
    .list table { width: 100%; border-collapse: collapse; table-layout: fixed; }
    .list th { height: 20px; padding: 0 4px; text-align: left; font-weight: 400; color: #111; border-right: 1px solid #ddd; }

    .view { display: grid; grid-template-columns: minmax(0, 1fr) 13px; grid-template-rows: minmax(0, 1fr) 16px; background: #a6a6a6; }
    .sheet { position: relative; min-height: 0; }
    .sheet cad-drawing { position: absolute; inset: 0; }
    .mdi { position: absolute; right: 6px; top: 2px; display: flex; gap: 2px; }
    .view .vbar .thumb { margin: 60px 0 146px; }
    .foot { display: flex; background: linear-gradient(90deg, #929292, #b5b5b5); grid-column: 1 / 3; padding: 0 12px 0 5px; }
    .model { width: 40px; height: 14px; font-size: 9px; line-height: 13px; color: #222; background: #d0d0d0; clip-path: polygon(0 0, 100% 0, 90% 100%, 10% 100%); }
    .foot .chip { margin: 2px 6px 0 auto; }
    .hbar { display: flex; align-items: center; justify-content: space-between; width: 166px; height: 13px; background: #f0f0f0; }
    .hbar .thumb { width: 13px; height: 12px; margin-right: 53px; }

    .cmdline { display: flex; align-items: flex-end; height: 17px; padding-left: 2px; background: linear-gradient(#f1f3f5, #c2c8ce); }
    .cmdline button { width: 56px; height: 15px; padding-left: 14px; font-size: 9px; line-height: 13px; color: #2c5298; background: linear-gradient(#fff, #ece9df); border: 1px solid #a4a8ae; border-bottom: 0; }
    .status { display: flex; align-items: center; height: 15px; padding-right: 9px; font-size: 9px; line-height: 12px; color: #111; background: linear-gradient(#7c7c7c, #c0c0c0 20%, #979797); }
    .status > span { flex: none; padding-left: 5px; white-space: nowrap; }
    .status .path { width: 149px; }
    .status .nums { font-size: 8px; color: #222; }
    .status .page { width: 76px; border-left: 1px solid #d2d2d2; }
    .modes { display: flex; gap: 4px; }
    .status .coords { flex: 1; }
    .status .total { border-left: 1px solid #ddd; }
    .cell { width: 93px; align-self: stretch; border-left: 1px solid #ddd; }

    .guide { position: absolute; left: 0; top: 0; width: 280px; height: 280px; pointer-events: none; }
  `;

  @state() private toggled = new Set(["wire", "clip", "dark", "arc"]);

  private toggle(name: string) {
    const next = new Set(this.toggled);
    next.has(name) ? next.delete(name) : next.add(name);
    this.toggled = next;
  }

  private cmd(name: string, label: string, off = false) {
    return html`<button class=${this.toggled.has(name) ? "on" : ""} ?disabled=${off} @click=${() => this.toggle(name)}>${icon(name)}<span>${label}</span></button>`;
  }

  private tool(name: string, title: string, drop = false) {
    return html`<button class=${drop ? "drop" : ""} aria-label=${title}>${icon(name)}</button>`;
  }

  private act(name: string, title: string, size = "ic") {
    return html`<button aria-label=${title}>${icon(name, size)}</button>`;
  }

  render() {
    const rows: [string, unknown][] = [
      ["色彩", html`<span class="swatch"></span>以图层`],
      ["图层", "建筑"],
      ["线型", "以图层"],
      ["线型比例", html`<span class="latin">1</span>`],
      ["线宽", "以图层"],
      ["文字样式", html`<span class="latin">DIM_FONT</span>`],
    ];
    return html`<main class="window">
      <header class="title">
        <div class="logo">CAD</div>
        <div class="quick">
          ${this.act("add", "新建", "big")}${this.act("open", "打开", "big")}${this.act("save", "保存", "big")}${this.act("saveas", "另存为", "big")}${this.act("print", "打印", "big")}${this.act("undo", "撤销", "big")}${this.act("redo", "重做", "big")}
        </div>
        <h1 class="caption">迅捷CAD编辑器</h1>
        <div class="account">
          ${icon("user", "big")}<span class="name">羽卒</span>
          ${icon("crown", "big")}<button class="vip">加入VIP</button>
          ${icon("dots", "big")}<button>更多</button>
          <div class="winbtns">${this.act("min", "最小化")}${this.act("max", "最大化")}${this.act("close", "关闭")}</div>
        </div>
      </header>
      <nav class="menu">
        <button class="file">文件</button><button class="on">查看器</button>
        <button>编辑器</button><button>高级</button><button>输出</button><button>VIP功能</button><button>相关软件</button>
        <div class="tools">${this.act("note", "样式")}${this.act("caret", "收起")}<span class="last">${this.act("help", "帮助")}</span></div>
      </nav>
      <section class="ribbon">
        <div class="group g1"><div class="cmds">${this.cmd("wire", "2维线框")}${this.cmd("cyl", "3维视图")}</div><h2>可视化风格</h2></div>
        <div class="group g2"><div class="cmds">
          ${this.cmd("clip", "剪切框架")}${this.cmd("emf", "复制为EMF格式")}${this.cmd("bmp", "复制为BMP格式")}
          ${this.cmd("point", "显示点")}${this.cmd("find", "查找文字")}${this.cmd("raster", "修剪光栅", true)}
        </div><h2>工具</h2></div>
        <div class="group g3"><div class="cmds">
          ${this.cmd("dark", "黑色背景")}${this.cmd("bw", "黑白绘图")}${this.cmd("arc", "圆滑弧形")}${this.cmd("layers", "图层")}${this.cmd("chain", "结构")}
        </div><h2>CAD绘图设置</h2></div>
        <div class="group g4"><div class="cmds tight">
          ${this.tool("locA", "组合")}${this.tool("locB", "复制视图")}${this.tool("locC", "旋转")}
          ${this.tool("zwin", "窗口缩放")}${this.tool("zext", "全图")}${this.tool("zprev", "上一视图")}
          ${this.tool("zin", "放大", true)}${this.tool("zout", "缩小", true)}${this.tool("zobj", "缩放对象", true)}
          ${this.tool("hand", "平移")}
        </div><h2>位置</h2></div>
        <div class="group g5"><div class="cmds tight">
          ${this.tool("back", "后退")}<i></i><i></i>${this.tool("fwd", "前进")}<i></i><i></i>${this.tool("undoV", "撤销视图")}<i></i><i></i>${this.tool("redoV", "重做视图")}
        </div><h2>浏览</h2></div>
        <div class="group g6"><div class="cmds">${this.cmd("lw", "线宽")}${this.cmd("dim", "测量")}${this.cmd("txt", "文本")}</div><h2>隐藏</h2></div>
        <div class="group g7"><div class="cmds">${this.cmd("dist", "距离")}${this.cmd("poly", "多段线长度")}${this.cmd("area", "面积")}</div><h2>测量</h2></div>
      </section>
      <div class="docs">
        <div class="doc">南方某地城市公园建筑规划设计方案图.dwg<button class="chip" aria-label="关闭图纸">${icon("wx", "small")}</button></div>
        <button class="chip" aria-label="图纸列表">${icon("wchev", "small")}</button>
      </div>
      <div class="body">
        <aside class="side">
          <div class="head"><h3>属性</h3>${icon("pin", "small")}</div>
          <label class="pick"><select aria-label="默认值"><option>默认值</option></select>${icon("chevD")}</label>
          <div class="props">
            <table>
              <thead><tr><th scope="col"><span class="fold"></span>一般设置</th><th></th></tr></thead>
              <tbody>${rows.map(([k, v]) => html`<tr><th scope="row">${k}</th><td>${v}</td></tr>`)}</tbody>
            </table>
            <div class="vbar">${icon("chevU")}<span class="thumb"></span>${icon("chevD")}</div>
          </div>
          <div class="fav">
            <div class="head"><h3>收藏夹</h3>${icon("pin", "small")}</div>
            <div class="list"><table><thead><tr><th scope="col">名称</th><th scope="col">路径</th></tr></thead></table></div>
          </div>
        </aside>
        <section class="view">
          <div class="sheet">
            <cad-drawing></cad-drawing>
            <div class="mdi">${this.act("mmin", "最小化图纸", "small")}${this.act("mrest", "还原图纸", "small")}${this.act("mclose", "关闭图纸", "small")}</div>
          </div>
          <div class="vbar">${icon("chevU")}<span class="thumb"></span>${icon("chevD")}</div>
          <div class="foot">
            <button class="model">Model</button>
            <button class="chip" aria-label="布局列表">${icon("wchev", "small")}</button>
            <div class="hbar">${icon("chevL")}<span class="thumb"></span>${icon("chevR")}</div>
          </div>
        </section>
      </div>
      <div class="cmdline"><button>命令行</button></div>
      <footer class="status">
        <span class="path">南方某地城市公园建筑规划设计 ...</span>
        <span class="page nums">12/13</span>
        <div class="modes">${this.act("magnet", "对象捕捉")}${this.act("grid", "栅格")}${this.act("ortho", "正交")}${this.act("snap", "捕捉")}</div>
        <span class="coords nums">(5.659267E+007; 8.648816E+007; 0)</span>
        <i class="cell"></i>
        <span class="total nums">503455.5 x 516919.3 x 35586.4</span>
      </footer>
      <svg class="guide" viewBox="5 5 280 280" aria-hidden="true">
        <rect x="80" y="44" width="77" height="24" rx="1" fill="none" stroke="#ff1e14" stroke-width="2"/>
        <path d="M160 56 268 257l6-2 0 16-13-9 4-2L160 58z" fill="#ff2218" stroke="#ff2218" stroke-width="1.500"/>
      </svg>
    </main>`;
  }
}
